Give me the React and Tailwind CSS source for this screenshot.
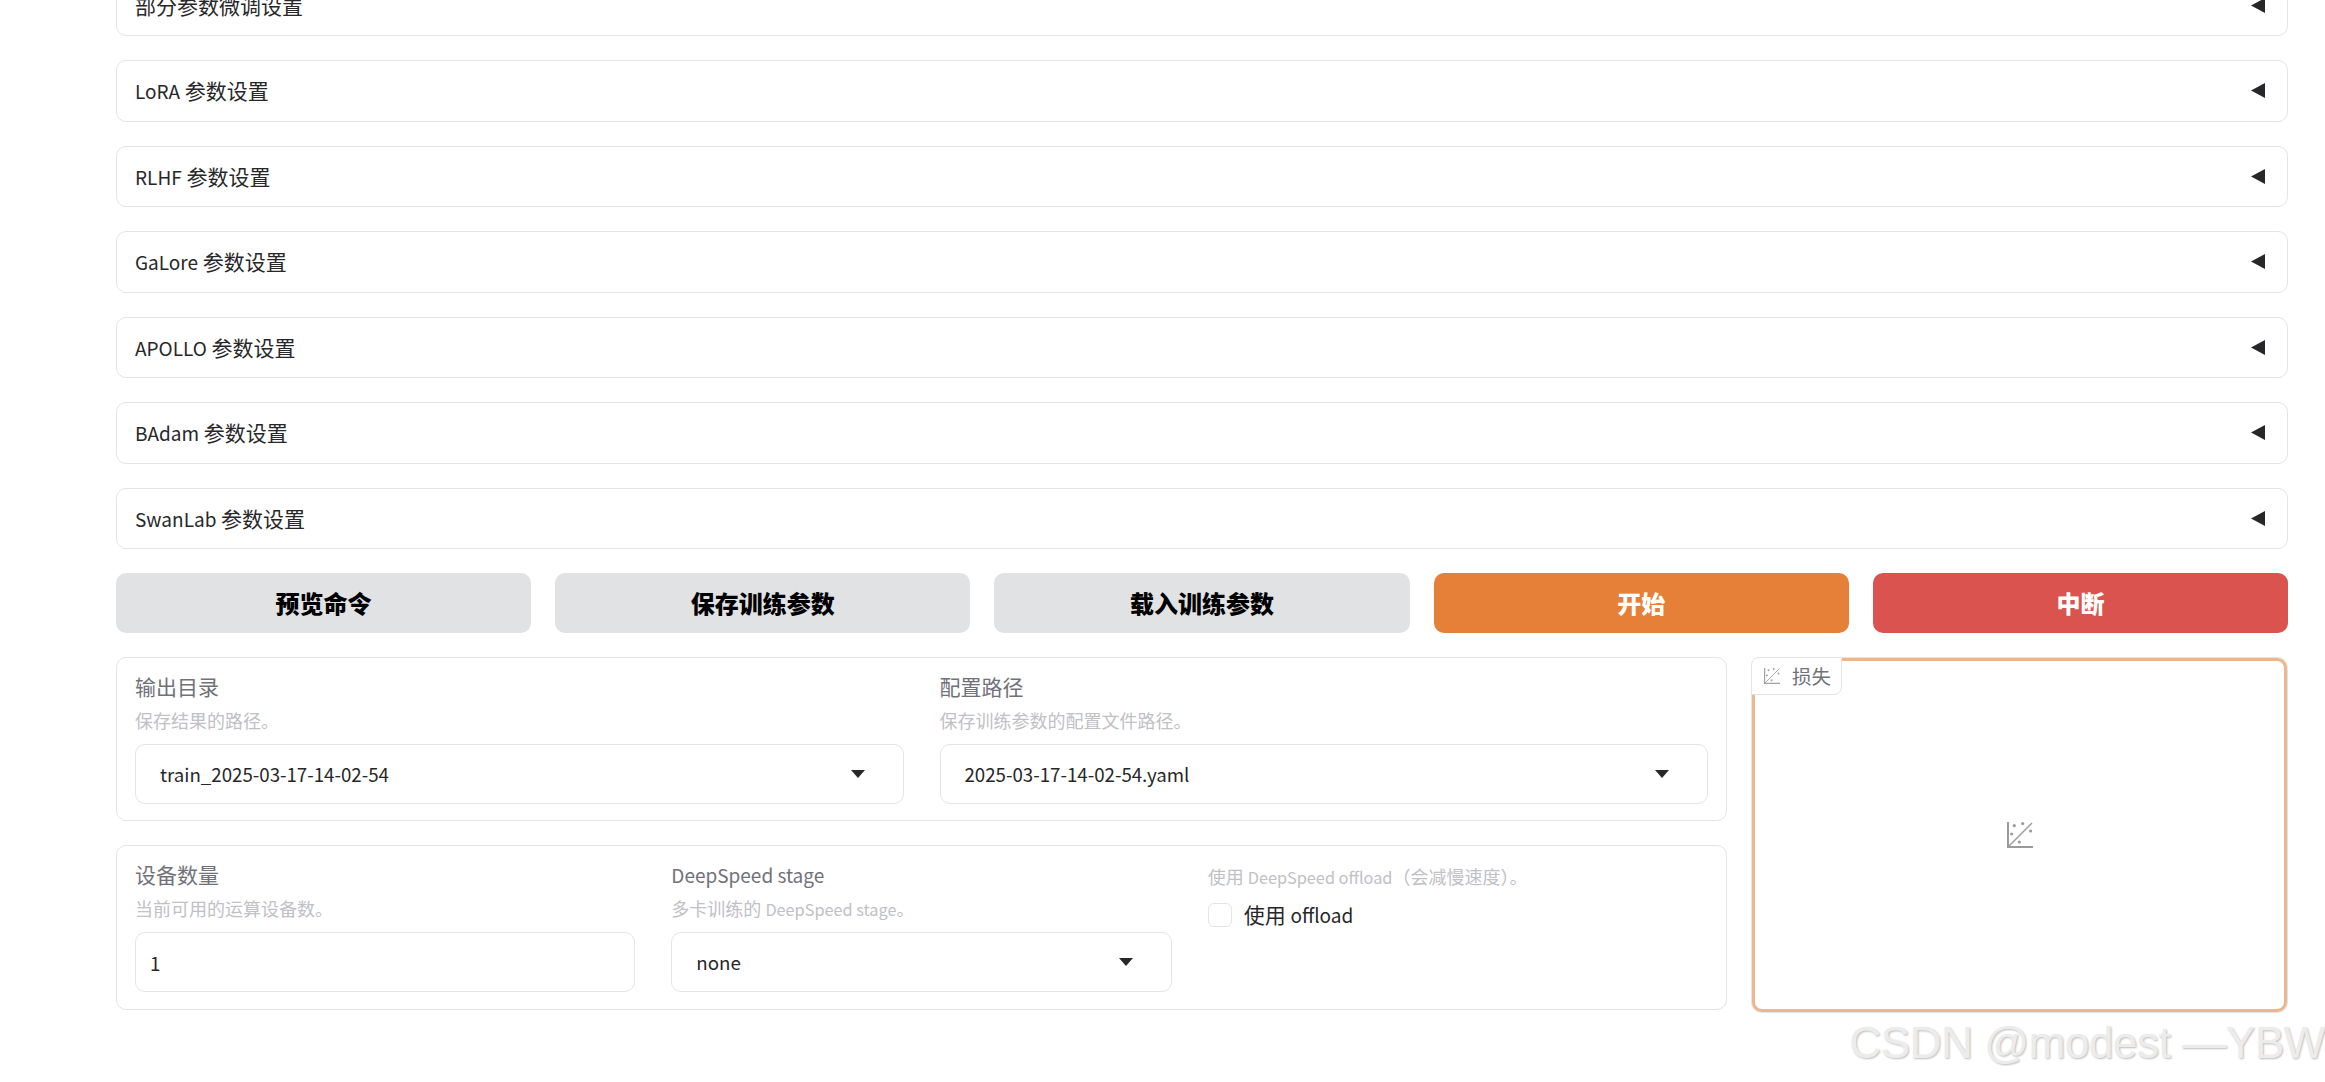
const FONT = "font-['Noto_Sans_CJK_SC','Noto_Sans',sans-serif]";

const accordions = [
  "部分参数微调设置",
  "LoRA 参数设置",
  "RLHF 参数设置",
  "GaLore 参数设置",
  "APOLLO 参数设置",
  "BAdam 参数设置",
  "SwanLab 参数设置",
];

// latin runs sit a bit smaller than the CJK around them
const Mixed = ({ text }) =>
  text.split(/([A-Za-z][A-Za-z ]*[A-Za-z])/).map((part, i) =>
    i % 2 ? (
      <span key={i} className="text-[0.905em]">
        {part}
      </span>
    ) : (
      part
    )
  );

const ScatterIcon = ({ className }) => (
  <svg viewBox="0 0 26 26" className={className} fill="none">
    <path d="M1 0V25H26" stroke="currentColor" strokeWidth="2" />
    <path d="M2 24L25 1" stroke="currentColor" strokeWidth="1.5" />
    <circle cx="7.3" cy="3.7" r="1.6" fill="currentColor" />
    <circle cx="15.7" cy="1.6" r="1.6" fill="currentColor" />
    <circle cx="23.6" cy="9" r="1.6" fill="currentColor" />
    <circle cx="4.7" cy="12" r="1.6" fill="currentColor" />
    <circle cx="12.3" cy="20" r="1.6" fill="currentColor" />
  </svg>
);

const Accordion = ({ title }) => (
  <div className="flex h-[61.5px] items-center justify-between rounded-[10px] border-[1.5px] border-[#e4e4e7] bg-white pl-[18px] pr-[22px]">
    <span className="text-[21px] text-[#27272a]">
      <Mixed text={title} />
    </span>
    <svg viewBox="0 0 14 15" className="h-[15px] w-[14px]">
      <polygon points="0,7.5 14,0 14,15" fill="#27272a" />
    </svg>
  </div>
);

const ActionButton = ({ children, className }) => (
  <button className={`flex h-[60px] flex-1 items-center justify-center rounded-[10px] text-[24px] font-black ${className}`}>
    {children}
  </button>
);

const Label = ({ title, info }) => (
  <div className="flex flex-col">
    <span className="h-[32px] text-[21px] leading-[32px] text-[#71717a]">
      <Mixed text={title} />
    </span>
    <span className="mt-[6px] h-[24px] text-[18px] leading-[24px] text-[#c0c0c6]">
      <Mixed text={info} />
    </span>
  </div>
);

const Select = ({ title, info, value }) => (
  <div className="flex min-w-0 flex-1 flex-col">
    <Label title={title} info={info} />
    <div className="mt-[12px] flex h-[60px] items-center justify-between rounded-[10px] border-[1.5px] border-[#e4e4e7] bg-white pl-[24px] pr-[38px]">
      <span className="text-[18.7px] text-[#27272a]">{value}</span>
      <svg viewBox="0 0 14 8" className="h-[8px] w-[14px]">
        <polygon points="0,0 14,0 7,8" fill="#27272a" />
      </svg>
    </div>
  </div>
);

export default function App() {
  return (
    <div className={`relative h-[1082px] overflow-hidden bg-white ${FONT}`}>
      <div className="mt-[-25.5px] flex flex-col gap-[24px] pl-[116px] pr-[37px]">
        {accordions.map((a) => (
          <Accordion key={a} title={a} />
        ))}

        <div className="flex gap-[24px]">
          <ActionButton className="bg-[#e1e2e4] text-black">预览命令</ActionButton>
          <ActionButton className="bg-[#e1e2e4] text-black">保存训练参数</ActionButton>
          <ActionButton className="bg-[#e1e2e4] text-black">载入训练参数</ActionButton>
          <ActionButton className="bg-[#e67f37] text-white">开始</ActionButton>
          <ActionButton className="bg-[#da534e] text-white">中断</ActionButton>
        </div>

        <div className="flex gap-[24px]">
          <div className="flex w-[1611px] flex-col gap-[24px]">
            <div className="flex h-[164px] gap-[36px] rounded-[10px] border-[1.5px] border-[#e4e4e7] px-[18px] pt-[12px]">
              <Select title="输出目录" info="保存结果的路径。" value="train_2025-03-17-14-02-54" />
              <Select title="配置路径" info="保存训练参数的配置文件路径。" value="2025-03-17-14-02-54.yaml" />
            </div>

            <div className="flex h-[165px] gap-[36px] rounded-[10px] border-[1.5px] border-[#e4e4e7] px-[18px] pt-[12px]">
              <div className="flex min-w-0 flex-1 flex-col">
                <Label title="设备数量" info="当前可用的运算设备数。" />
                <input
                  defaultValue="1"
                  className="mt-[12px] h-[60px] rounded-[10px] border-[1.5px] border-[#e4e4e7] px-[14px] text-[18.7px] text-[#27272a] outline-none"
                />
              </div>
              <Select title="DeepSpeed stage" info="多卡训练的 DeepSpeed stage。" value="none" />
              <div className="flex min-w-0 flex-1 flex-col">
                <span className="mt-[2px] h-[32px] text-[18px] leading-[32px] text-[#c0c0c6]">
                  <Mixed text="使用 DeepSpeed offload（会减慢速度）。" />
                </span>
                <label className="mt-[7px] flex items-center gap-[12px]">
                  <input type="checkbox" className="h-[24px] w-[24px] appearance-none rounded-[6px] border-[1.5px] border-[#e4e4e7] bg-white" />
                  <span className="text-[21px] text-[#27272a]">
                    <Mixed text="使用 offload" />
                  </span>
                </label>
              </div>
            </div>
          </div>

          <div className="relative m-[1px] flex h-[354px] flex-1 items-center justify-center rounded-[10px] border-[3px] border-[#edb78d] bg-white ring-1 ring-[#e4e4e7]">
            <div className="absolute left-[-4px] top-[-4px] flex h-[38px] w-[91px] items-center gap-[12px] rounded-br-[8px] rounded-tl-[8px] border-[1.5px] border-[#e4e4e7] bg-white pl-[12px]">
              <ScatterIcon className="h-[16px] w-[16px] shrink-0 text-[#a3a3a3]" />
              <span className="text-[19.5px] leading-none text-[#71717a]">损失</span>
            </div>
            <ScatterIcon className="h-[26px] w-[26px] text-[#9b9b9b]" />
          </div>
        </div>
      </div>

      <div className="absolute right-0 top-[1015px] whitespace-nowrap font-['Liberation_Sans',sans-serif] text-[44px] leading-[56px] tracking-[-0.4px] text-[#ececec] [text-shadow:1px_1px_2px_#bdbdbd]">
        CSDN @modest —YBW
      </div>
    </div>
  );
}
